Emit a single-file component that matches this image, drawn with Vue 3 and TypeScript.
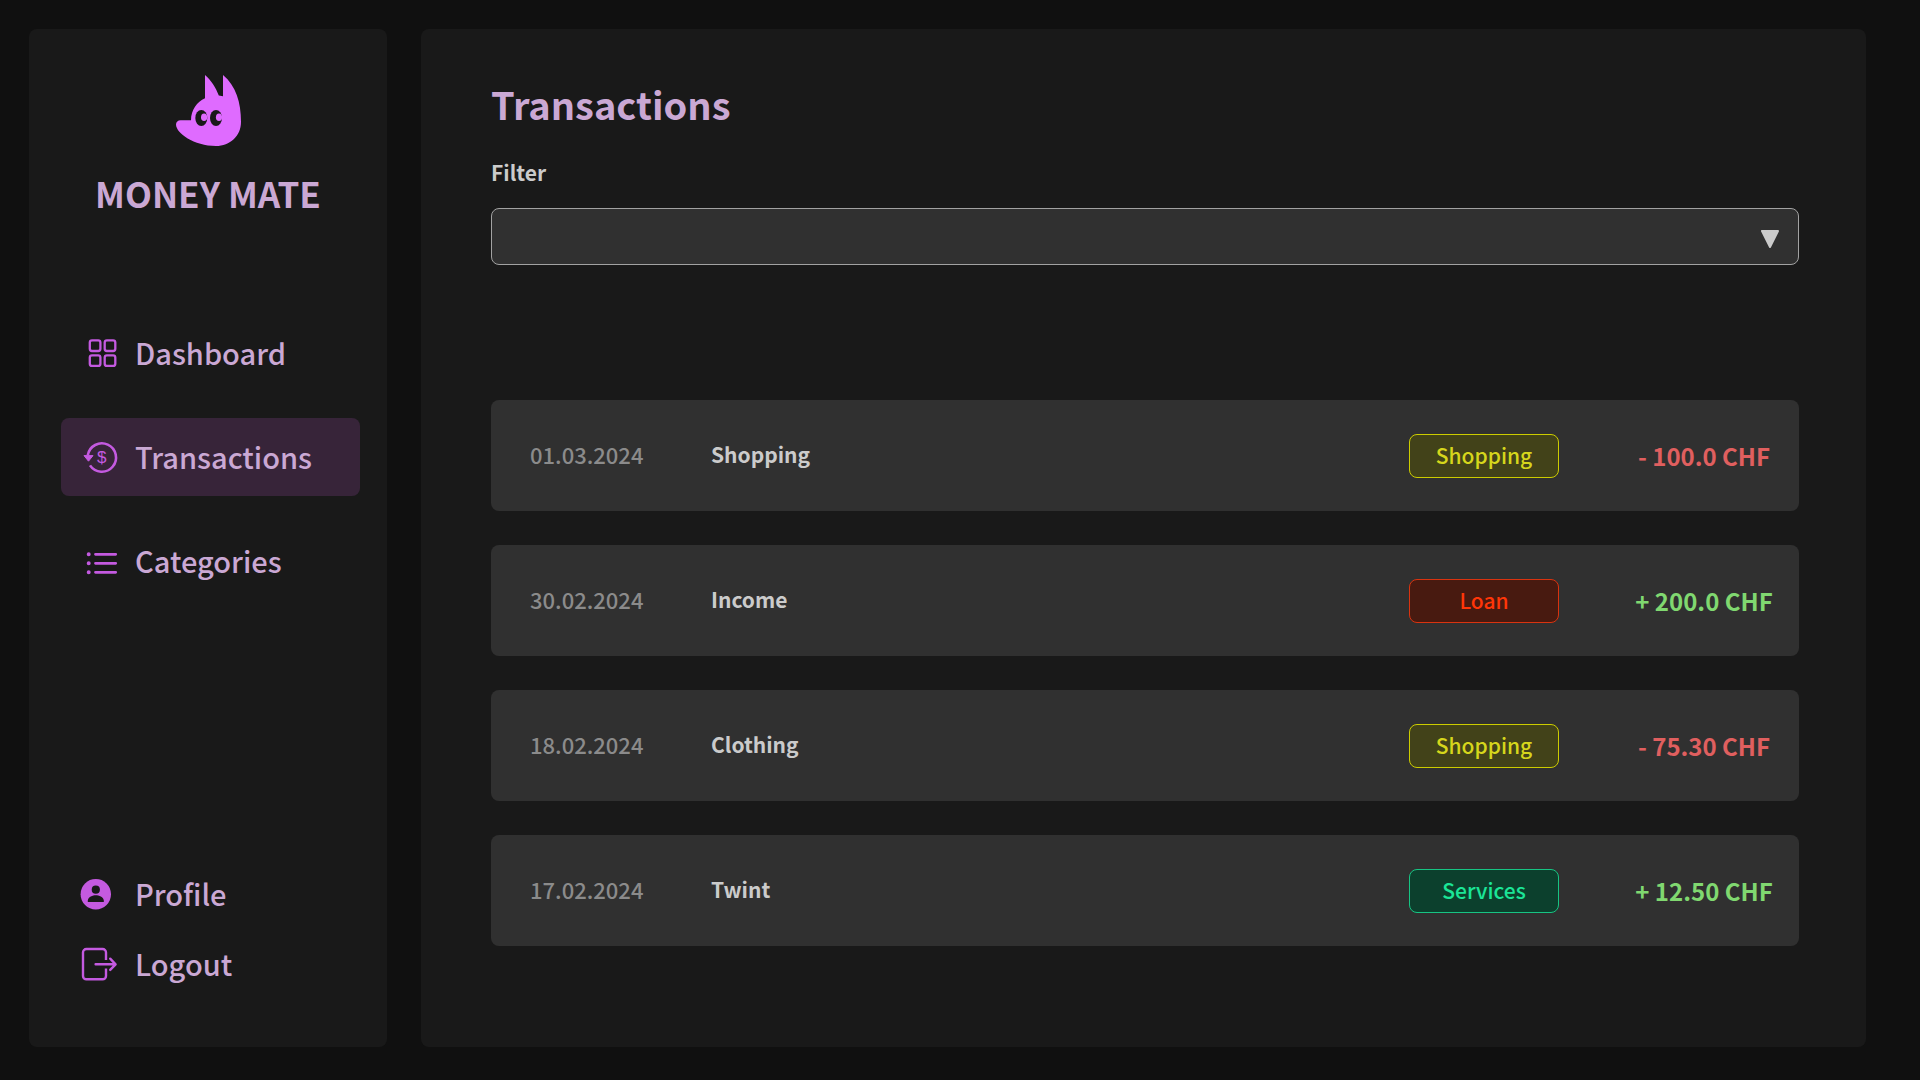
<script setup lang="ts">
import { ref } from 'vue'

type Tone = 'yellow' | 'red' | 'green'

interface Transaction {
  date: string
  title: string
  category: string
  tone: Tone
  amount: string
  income: boolean
}

const transactions: Transaction[] = [
  { date: '01.03.2024', title: 'Shopping', category: 'Shopping', tone: 'yellow', amount: '- 100.0 CHF', income: false },
  { date: '30.02.2024', title: 'Income', category: 'Loan', tone: 'red', amount: '+ 200.0 CHF', income: true },
  { date: '18.02.2024', title: 'Clothing', category: 'Shopping', tone: 'yellow', amount: '- 75.30 CHF', income: false },
  { date: '17.02.2024', title: 'Twint', category: 'Services', tone: 'green', amount: '+ 12.50 CHF', income: true },
]

const filter = ref('')
</script>

<template>
  <div class="page">
    <aside class="sidebar">
      <svg class="logo" viewBox="0 0 65 71" aria-hidden="true">
        <path
          fill="#df6bff"
          d="M29 0C35 5 40 13 42.8 20.5L47 21.3V0C60 11 65 27 65 47C65 61 54 71 40 71C18 71 0 58 0 49.5C0 47 2 45.3 4.5 45.3H15C15 35 21 27 29 23.3Z"
        />
        <g fill="#191919">
          <ellipse cx="25.3" cy="43" rx="6" ry="8" />
          <ellipse cx="40" cy="43" rx="6" ry="8" />
        </g>
        <g fill="#df6bff">
          <ellipse cx="28.1" cy="42.3" rx="3.1" ry="3.8" />
          <ellipse cx="43" cy="42.3" rx="3.1" ry="3.8" />
        </g>
      </svg>
      <p class="brand">MONEY MATE</p>

      <nav class="nav">
        <a class="nav-item" href="#dashboard">
          <svg class="icon" viewBox="0 0 40 40" fill="none" stroke="currentColor" stroke-width="2.3" aria-hidden="true">
            <rect x="9.8" y="8.4" width="10.6" height="10.6" rx="2.2" />
            <rect x="24.7" y="8.4" width="10.6" height="10.6" rx="2.2" />
            <rect x="9.8" y="23.3" width="10.6" height="10.6" rx="2.2" />
            <rect x="24.7" y="23.3" width="10.6" height="10.6" rx="2.2" />
          </svg>
          <span>Dashboard</span>
        </a>
        <a class="nav-item active" href="#transactions" aria-current="page">
          <svg class="icon" viewBox="0 0 40 40" aria-hidden="true">
            <path
              d="M7.8 19.3A14.2 14.2 0 1 1 10 29.4"
              fill="none"
              stroke="currentColor"
              stroke-width="2.6"
            />
            <path d="M4 19.6H13L8.5 25.2Z" fill="currentColor" stroke="currentColor" stroke-linejoin="round" />
            <text class="coin" x="21.7" y="27.4" text-anchor="middle" fill="currentColor">$</text>
          </svg>
          <span>Transactions</span>
        </a>
        <a class="nav-item" href="#categories">
          <svg class="icon" viewBox="0 0 40 40" fill="none" stroke="currentColor" stroke-linecap="round" aria-hidden="true">
            <path stroke-width="2.8" d="M15.5 14.3H35.7M15.5 23.3H35.7M15.5 32.3H35.7" />
            <path stroke-width="4" d="M8.7 14.3h.01M8.7 23.3h.01M8.7 32.3h.01" />
          </svg>
          <span>Categories</span>
        </a>
      </nav>

      <nav class="nav account">
        <a class="nav-item" href="#profile">
          <svg class="icon" viewBox="0 0 40 40" aria-hidden="true">
            <circle cx="15.8" cy="21.3" r="15.2" fill="currentColor" />
            <circle cx="15.8" cy="16.7" r="4.1" fill="#191919" />
            <path fill="#191919" d="M7.8 29V27.6C7.8 24 13 22.2 15.8 22.2S23.8 24 23.8 27.6V29Z" />
          </svg>
          <span>Profile</span>
        </a>
        <a class="nav-item" href="#logout">
          <svg
            class="icon"
            viewBox="0 0 40 40"
            fill="none"
            stroke="currentColor"
            stroke-width="2.4"
            stroke-linejoin="round"
            aria-hidden="true"
          >
            <path d="M26 17V9.4A3.4 3.4 0 0 0 22.6 6H6.4A3.4 3.4 0 0 0 3 9.4V32.9A3.4 3.4 0 0 0 6.4 36.3H22.6A3.4 3.4 0 0 0 26 32.9V25.6" />
            <path stroke-linecap="round" d="M15.6 21.3H35.4M30.2 15.7L35.6 21.3L30.2 26.9" />
          </svg>
          <span>Logout</span>
        </a>
      </nav>
    </aside>

    <main class="content">
      <h1 id="page-title" class="title">Transactions</h1>

      <label class="filter-label" for="filter">Filter</label>
      <div class="filter">
        <select id="filter" v-model="filter" class="filter-select">
          <option value=""></option>
          <option value="shopping">Shopping</option>
          <option value="loan">Loan</option>
          <option value="services">Services</option>
        </select>
        <svg class="filter-arrow" viewBox="0 0 18 18" aria-hidden="true">
          <path d="M1 1H17L9 17Z" fill="#cbcbcb" stroke="#cbcbcb" stroke-width="2" stroke-linejoin="round" />
        </svg>
      </div>

      <table class="transactions" aria-labelledby="page-title">
        <tbody class="rows">
          <tr v-for="item in transactions" :key="item.date" class="row">
            <td class="date">{{ item.date }}</td>
            <td class="name">{{ item.title }}</td>
            <td>
              <span class="badge" :class="item.tone">{{ item.category }}</span>
            </td>
            <td class="amount" :class="item.income ? 'income' : 'expense'">{{ item.amount }}</td>
          </tr>
        </tbody>
      </table>
    </main>
  </div>
</template>

<style>
body {
  margin: 0;
  background: #101010;
}
</style>

<style scoped>
.page {
  box-sizing: border-box;
  display: flex;
  gap: 34px;
  min-height: 100vh;
  padding: 29px 54px 33px 29px;
  background: #101010;
  color: #cbcbcb;
  font-family: "Noto Sans CJK SC", "Noto Sans", sans-serif;
}

.sidebar {
  box-sizing: border-box;
  display: flex;
  flex: none;
  flex-direction: column;
  width: 358px;
  padding: 46px 27px 48px;
  border-radius: 8px;
  background: #191919;
}

.logo {
  align-self: center;
  width: 65px;
  height: 71px;
}

.brand {
  margin: 25px 0 99px;
  color: #caa8d4;
  font-size: 35px;
  font-weight: 700;
  line-height: 44px;
  text-align: center;
  white-space: nowrap;
}

.nav {
  display: flex;
  flex-direction: column;
  gap: 26px;
  margin-left: 5px;
}

.nav-item {
  box-sizing: border-box;
  display: flex;
  align-items: center;
  gap: 15px;
  height: 78px;
  padding: 0 19px 2px;
  border-radius: 8px;
  color: #caa8d4;
  font-size: 29px;
  font-weight: 500;
  line-height: 40px;
  text-decoration: none;
}

.nav-item.active {
  background: #372439;
}

.account {
  gap: 0;
  margin-top: auto;
}

.account .nav-item {
  height: 70px;
}

.icon {
  flex: none;
  width: 40px;
  height: 40px;
  color: #c45ae0;
}

.coin {
  font-family: "Liberation Sans", sans-serif;
  font-size: 17px;
  font-weight: 400;
}

.content {
  flex: 1;
  min-width: 0;
  padding: 51px 67px 64px 70px;
  border-radius: 8px;
  background: #191919;
}

.title {
  margin: 0 0 28px;
  color: #caa8d4;
  font-size: 38px;
  font-weight: 700;
  line-height: 48px;
}

.filter-label {
  display: block;
  margin-bottom: 20px;
  font-size: 21px;
  font-weight: 700;
  line-height: 32px;
}

.filter {
  position: relative;
  margin-bottom: 135px;
}

.filter-select {
  display: block;
  width: 100%;
  height: 57px;
  padding: 0 56px 0 20px;
  border: 1px solid #a2a2a2;
  border-radius: 8px;
  appearance: none;
  background: #303030;
  color: #cbcbcb;
  font-family: inherit;
  font-size: 21px;
}

.filter-arrow {
  position: absolute;
  top: 22px;
  right: 20px;
  width: 18px;
  height: 18px;
  pointer-events: none;
}

.transactions {
  display: block;
}

.rows {
  display: grid;
  gap: 34px;
}

.row {
  display: grid;
  grid-template-columns: 181px 1fr 200px 190px;
  align-items: center;
  height: 111px;
  padding-left: 39px;
  border-radius: 8px;
  background: #303030;
}

.row td {
  padding: 0;
}

.row .date,
.row .name {
  padding-bottom: 4px;
  line-height: 32px;
}

.date {
  color: #8b8b8b;
  font-size: 22px;
  font-weight: 500;
}

.name {
  font-size: 21px;
  font-weight: 700;
}

.badge {
  box-sizing: border-box;
  display: block;
  width: 150px;
  height: 44px;
  border: 1px solid;
  border-radius: 8px;
  font-size: 21px;
  font-weight: 500;
  line-height: 40px;
  text-align: center;
}

.badge.yellow {
  border-color: #cccc00;
  background: #424219;
  color: #d6d61c;
}

.badge.red {
  border-color: #d9330f;
  background: #481a10;
  color: #ff3608;
}

.badge.green {
  border-color: #17c483;
  background: #0c402d;
  color: #1be597;
}

.amount {
  font-size: 24px;
  font-weight: 700;
  line-height: 32px;
  text-align: center;
}

.income {
  color: #80d870;
}

.expense {
  color: #e05f5f;
}
</style>
